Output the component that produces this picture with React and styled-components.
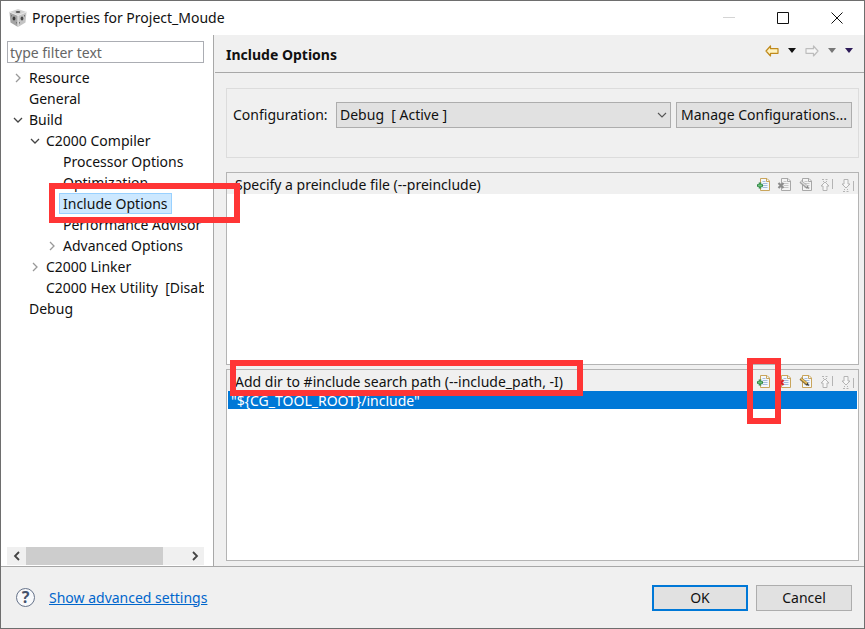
import React from "react";
import styled, { createGlobalStyle } from "styled-components";

const tree = [
  { name: "Resource", level: 0, arrow: "closed" },
  { name: "General", level: 0 },
  { name: "Build", level: 0, arrow: "open" },
  { name: "C2000 Compiler", level: 1, arrow: "open" },
  { name: "Processor Options", level: 2 },
  { name: "Optimization", level: 2 },
  { name: "Include Options", level: 2, selected: true },
  { name: "Performance Advisor", level: 2 },
  { name: "Advanced Options", level: 2, arrow: "closed" },
  { name: "C2000 Linker", level: 1, arrow: "closed" },
  { name: "C2000 Hex Utility  [Disabled]", level: 1 },
  { name: "Debug", level: 0 },
];

function CubeIcon() {
  return (
    <svg width="20" height="20" viewBox="0 0 20 20">
      <path d="M10 1 18.5 4 10 7.5 1.5 4Z" fill="#d4d4d4" />
      <path d="M1.5 4 10 7.5V19L2.5 14.5Z" fill="#a4a4a4" />
      <path d="M18.5 4 10 7.5V19L17.5 14.5Z" fill="#c4c4c4" />
      <path d="M1.5 4 10 7.5 18.5 4M10 7.5V19" fill="none" stroke="#e8e8e8" />
      <ellipse cx="10" cy="4" rx="2.4" ry="1.1" fill="#555" />
      <ellipse cx="6" cy="10.5" rx="1.4" ry="2" fill="#3c3c3c" />
      <ellipse cx="14" cy="10.5" rx="1.4" ry="2" fill="#4a4a4a" />
      <path d="M3.5 7v1.5M8.5 14v1.5M16.5 7v1.5M11.5 14v1.5" stroke="#777" />
    </svg>
  );
}

function Chevron({ direction, color = "#444", size = 10, weight = 1.3 }) {
  const paths = {
    right: "M3 1 7 5 3 9",
    left: "M7 1 3 5 7 9",
    down: "M1 3 5 7 9 3",
  };
  return (
    <svg width={size} height={size} viewBox="0 0 10 10">
      <path d={paths[direction]} fill="none" stroke={color} strokeWidth={weight} />
    </svg>
  );
}

function HistoryArrow({ forward }) {
  return (
    <svg width="14" height="12" viewBox="0 0 14 12">
      <path
        d={
          forward
            ? "M13 6 8.5 1v2.7H1v4.6h7.5V11Z"
            : "M1 6 5.5 1v2.7H13v4.6H5.5V11Z"
        }
        fill={forward ? "#f6f6f6" : "#fff3c0"}
        stroke={forward ? "#bdbdbd" : "#c08a1c"}
        strokeWidth="1.2"
        strokeLinejoin="round"
      />
    </svg>
  );
}

function Triangle({ color }) {
  return (
    <svg width="8" height="5" viewBox="0 0 8 5">
      <path d="M0 0h8L4 5Z" fill={color} />
    </svg>
  );
}

function Page({ active }) {
  const edge = active ? "#c9a55c" : "#a8a8a8";
  return (
    <>
      <path
        d="M4.5 1.5h6.5l2.5 2.5v9.5h-9Z"
        fill={active ? "#f4f8fd" : "#f4f4f4"}
        stroke={edge}
      />
      <path d="M10.5 1.5v3h3" fill="none" stroke={edge} />
      <path
        d="M6.5 4.5h3M6.5 6.5h5M6.5 8.5h5M6.5 10.5h5"
        stroke={active ? "#a5bddc" : "#c8c8c8"}
      />
    </>
  );
}

function ToolIcon({ kind, active }) {
  const grey = "#b4b4b4";
  return (
    <svg width="16" height="16" viewBox="0 0 16 16">
      {kind === "add" && (
        <>
          <Page active />
          <path d="M4 5.5v6M1 8.500h6" stroke="#2c8442" strokeWidth="2.6" />
          <path d="M4 6.5v4M2 8.5h4" stroke="#6cc47a" />
        </>
      )}
      {kind === "delete" && (
        <>
          <Page active={active} />
          <path
            d="m1.5 6 5 5M6.5 6l-5 5"
            stroke={active ? "#d3222b" : "#8c8c8c"}
            strokeWidth="2.2"
          />
        </>
      )}
      {kind === "edit" && (
        <>
          <Page active={active} />
          <path
            d="m2.5 4.5 7 6"
            stroke={active ? "#8b7340" : "#a2a2a2"}
            strokeWidth="3"
          />
          <path
            d="m3 4.5 6 5"
            stroke={active ? "#f1c45b" : "#dcdcdc"}
            strokeWidth="1.4"
          />
          <path d="m9.5 9 2 3-3.5-1Z" fill={active ? "#333" : "#888"} />
        </>
      )}
      {kind === "up" && (
        <>
          <path d="M6 5 10 9H8v4.5H4V9H2Z" fill="#f7f7f7" stroke={grey} />
          <path d="M3 2.5h2M6.5 2.5h2M4 4.5h1M7 4.5h1M13.5 2v10" stroke={grey} />
        </>
      )}
      {kind === "down" && (
        <>
          <path d="M6 11 10 7H8V2.5H4V7H2Z" fill="#f7f7f7" stroke={grey} />
          <path d="M4 12.5h1M7 12.5h1M3 14.5h2M6.5 14.5h2M13.5 4v10" stroke={grey} />
        </>
      )}
    </svg>
  );
}

function ListPanel({ title, items, active }) {
  return (
    <Panel>
      <PanelHeader>
        <PanelTitle>{title}</PanelTitle>
        <Tools>
          {["add", "delete", "edit", "up", "down"].map((kind) => (
            <IconButton key={kind} aria-label={kind}>
              <ToolIcon kind={kind} active={active} />
            </IconButton>
          ))}
        </Tools>
      </PanelHeader>
      <List>
        {items.map((item) => (
          <ListItem key={item}>{item}</ListItem>
        ))}
      </List>
    </Panel>
  );
}

export default function App() {
  return (
    <Window>
      <GlobalStyle />
      <TitleBar>
        <CubeIcon />
        <Title>Properties for Project_Moude</Title>
        <WindowButton aria-label="Minimize">
          <svg width="12" height="12">
            <path d="M0 5.5h12" stroke="#d4d4d4" />
          </svg>
        </WindowButton>
        <WindowButton aria-label="Maximize">
          <svg width="12" height="12">
            <path d="M.5.5h11v11H.5Z" fill="none" stroke="#111" />
          </svg>
        </WindowButton>
        <WindowButton aria-label="Close">
          <svg width="12" height="12">
            <path d="m.5.5 11 11M11.5.5l-11 11" stroke="#111" />
          </svg>
        </WindowButton>
      </TitleBar>

      <Body>
        <Sidebar>
          <Filter aria-label="type filter text" placeholder="type filter text" />
          <Tree>
            {tree.map((node) => (
              <TreeItem key={node.name} $level={node.level}>
                <Toggle>
                  {node.arrow && (
                    <Chevron
                      direction={node.arrow === "open" ? "down" : "right"}
                      color={node.arrow === "open" ? "#444" : "#999"}
                    />
                  )}
                </Toggle>
                <TreeLabel $selected={node.selected}>{node.name}</TreeLabel>
              </TreeItem>
            ))}
          </Tree>
          <ScrollBar>
            <IconButton aria-label="Scroll left">
              <Chevron direction="left" weight={1.8} />
            </IconButton>
            <Track>
              <Thumb />
            </Track>
            <IconButton aria-label="Scroll right">
              <Chevron direction="right" weight={1.8} />
            </IconButton>
          </ScrollBar>
        </Sidebar>

        <Main>
          <PageHeader>
            <PageTitle>Include Options</PageTitle>
            <History>
              <PlainButton aria-label="Back">
                <HistoryArrow />
              </PlainButton>
              <PlainButton aria-label="Back history">
                <Triangle color="#111" />
              </PlainButton>
              <PlainButton aria-label="Forward">
                <HistoryArrow forward />
              </PlainButton>
              <PlainButton aria-label="Forward history">
                <Triangle color="#777" />
              </PlainButton>
              <PlainButton aria-label="Menu">
                <Triangle color="#2d1b58" />
              </PlainButton>
            </History>
          </PageHeader>
          <Content>
            <Configuration>
              <label htmlFor="configuration">Configuration:</label>
              <SelectWrap>
                <Select id="configuration">
                  <option>Debug&nbsp; [ Active ]</option>
                </Select>
                <SelectArrow>
                  <Chevron direction="down" color="#555" weight={1.1} />
                </SelectArrow>
              </SelectWrap>
              <Button $width={176}>Manage Configurations...</Button>
            </Configuration>
            <ListPanel title="Specify a preinclude file (--preinclude)" items={[]} />
            <ListPanel
              title="Add dir to #include search path (--include_path, -I)"
              items={['"${CG_TOOL_ROOT}/include"']}
              active
            />
          </Content>
        </Main>
      </Body>

      <Footer>
        <PlainButton aria-label="Help">
          <HelpIcon>?</HelpIcon>
        </PlainButton>
        <Link href="#advanced">Show advanced settings</Link>
        <Button $width={96} $primary>
          OK
        </Button>
        <Button $width={96}>Cancel</Button>
      </Footer>

      <Marker $left={48} $top={182} $width={191} $height={40} />
      <Marker $left={229} $top={359} $width={353} $height={36} />
      <Marker $left={746} $top={357} $width={34} $height={66} />
    </Window>
  );
}

const GlobalStyle = createGlobalStyle`
  * {
    box-sizing: border-box;
  }

  body {
    margin: 0;
    background: #f0f0f0;
    color: #111;
    font-family: "Noto Sans", "Open Sans", sans-serif;
    font-size: 14px;
    line-height: 20px;
  }

  button,
  input,
  select {
    font: inherit;
    color: inherit;
  }

  svg {
    display: block;
    flex: none;
  }
`;

const Window = styled.div`
  position: relative;
  display: flex;
  flex-direction: column;
  min-height: 100vh;
  border: 1px solid #6e6e6e;
  background: #f0f0f0;
`;

const TitleBar = styled.header`
  display: flex;
  align-items: center;
  height: 34px;
  padding-left: 7px;
  background: #fff;
`;

const Title = styled.h1`
  flex: 1;
  margin: 0 0 0 4px;
  font-size: 14px;
  font-weight: 400;
`;

const PlainButton = styled.button`
  display: flex;
  align-items: center;
  justify-content: center;
  padding: 0;
  border: 0;
  background: none;
`;

const WindowButton = styled(PlainButton)`
  width: 54px;
  height: 34px;
`;

const Body = styled.div`
  display: flex;
  flex: 1;
`;

const Sidebar = styled.aside`
  display: flex;
  flex: none;
  flex-direction: column;
  width: 213px;
  padding: 6px 9px 1px 6px;
  border-right: 1px solid #a8a8a8;
  background: #fff;
`;

const Filter = styled.input`
  width: 100%;
  height: 22px;
  padding: 0 2px;
  border: 1px solid #abadb3;
  background: #fff;

  &::placeholder {
    color: #666;
    opacity: 1;
  }
`;

const Tree = styled.ul`
  flex: 1;
  margin: 0;
  padding: 4px 0 0;
  overflow: hidden;
  list-style: none;
`;

const TreeItem = styled.li`
  display: flex;
  align-items: center;
  height: 21px;
  padding-left: ${(props) => 6 + props.$level * 17}px;
`;

const Toggle = styled.span`
  flex: none;
  width: 12px;
`;

const TreeLabel = styled.span`
  height: 21px;
  padding: 0 3px;
  border: 1px solid ${(props) => (props.$selected ? "#99d1ff" : "transparent")};
  background: ${(props) => (props.$selected ? "#cce8ff" : "none")};
  line-height: 19px;
  white-space: pre;
`;

const ScrollBar = styled.div`
  display: flex;
  height: 18px;
  background: #f0f0f0;
`;

const IconButton = styled(PlainButton)`
  flex: none;
  width: 19px;
  height: 18px;
`;

const Track = styled.div`
  flex: 1;
`;

const Thumb = styled.div`
  width: 86%;
  height: 100%;
  background: #cdcdcd;
`;

const Main = styled.main`
  display: flex;
  flex: 1;
  flex-direction: column;
  min-width: 0;
  margin-left: 1px;
`;

const PageHeader = styled.div`
  display: flex;
  align-items: center;
  justify-content: space-between;
  height: 38px;
  padding: 2px 11px 0;
  border-bottom: 1px solid #a8a8a8;
`;

const PageTitle = styled.h2`
  margin: 0;
  font-size: 14px;
  font-weight: 700;
`;

const History = styled.div`
  display: flex;
  align-items: center;
  gap: 9px;
  padding-bottom: 8px;
`;

const Content = styled.div`
  display: flex;
  flex: 1;
  flex-direction: column;
  gap: 4px;
  padding: 15px 5px 5px 11px;
`;

const Configuration = styled.div`
  display: flex;
  align-items: flex-start;
  height: 70px;
  margin-bottom: 10px;
  padding: 13px 6px;
  border: 1px solid #dcdcdc;

  label {
    flex: none;
    width: 103px;
    line-height: 26px;
  }
`;

const SelectWrap = styled.div`
  position: relative;
  flex: 1;
  margin-right: 5px;
`;

const Select = styled.select`
  width: 100%;
  height: 26px;
  padding: 0 3px;
  border: 1px solid #adadad;
  border-radius: 0;
  appearance: none;
  background: #e1e1e1;
`;

const SelectArrow = styled.span`
  position: absolute;
  top: 8px;
  right: 4px;
  pointer-events: none;
`;

const Button = styled.button`
  flex: none;
  width: ${(props) => props.$width}px;
  height: 26px;
  padding: 0;
  border: ${(props) => (props.$primary ? "2px solid #0078d7" : "1px solid #adadad")};
  background: #e1e1e1;
  line-height: 20px;
  white-space: nowrap;
`;

const Panel = styled.section`
  flex: 1;
  border: 1px solid #b4b4b4;
  background: #fff;
`;

const PanelHeader = styled.div`
  display: flex;
  align-items: center;
  justify-content: space-between;
  height: 21px;
  padding: 3px 1px 0 8px;
  background: #f0f0f0;
`;

const PanelTitle = styled.h3`
  margin: 0;
  font-size: 14px;
  font-weight: 400;
`;

const Tools = styled.div`
  display: flex;
  gap: 2px;
`;

const List = styled.ul`
  margin: 0;
  padding: 0 1px;
  list-style: none;
`;

const ListItem = styled.li`
  height: 18px;
  padding-left: 3px;
  background: #0078d7;
  color: #fff;
  line-height: 20px;
`;

const Footer = styled.footer`
  display: flex;
  align-items: center;
  gap: 8px;
  height: 62px;
  padding: 0 12px 0 15px;
  border-top: 1px solid #a8a8a8;
`;

const HelpIcon = styled.span`
  width: 19px;
  height: 19px;
  border: 1px solid #66738a;
  border-radius: 50%;
  background: #f8f9fb;
  color: #44526c;
  font-size: 16px;
  font-weight: 700;
  line-height: 17px;
`;

const Link = styled.a`
  margin: 0 auto 0 6px;
  color: #0066cc;
`;

const Marker = styled.div`
  position: absolute;
  top: ${(props) => props.$top}px;
  left: ${(props) => props.$left}px;
  width: ${(props) => props.$width}px;
  height: ${(props) => props.$height}px;
  border: 6px solid #ff3535;
  pointer-events: none;
`;
